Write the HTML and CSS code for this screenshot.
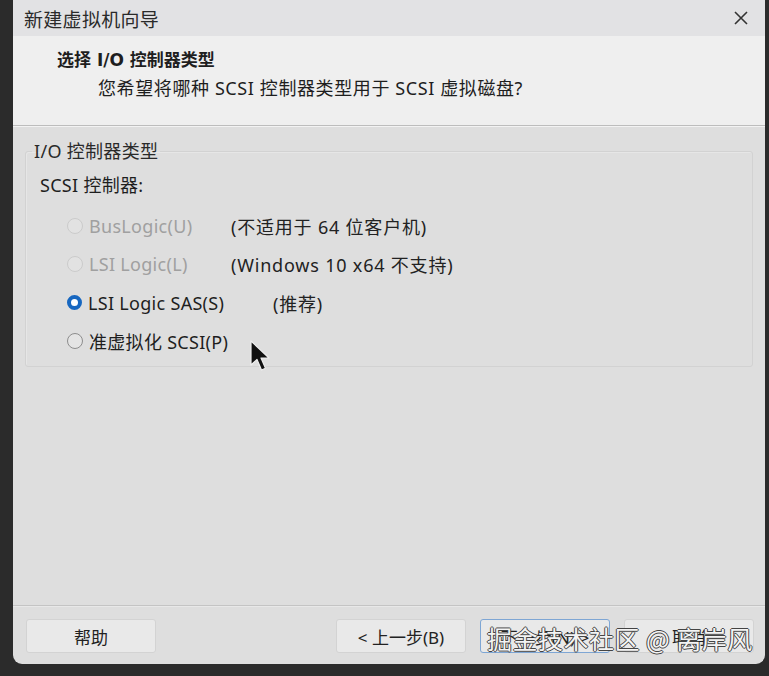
FILE: index.html
```html
<!DOCTYPE html>
<html lang="zh-CN">
<head>
<meta charset="utf-8">
<title>新建虚拟机向导</title>
<link rel="stylesheet" href="styles.css">
</head>
<body>
<div class="dialog">
  <div class="titlebar">
    <span class="title">新建虚拟机向导</span>
    <svg class="close" width="16" height="16" viewBox="0 0 16 16"><path d="M2 2 L14 14 M14 2 L2 14" stroke="#333" stroke-width="1.6" fill="none"/></svg>
  </div>
  <div class="header">
    <div class="h-title">选择 I/O 控制器类型</div>
    <div class="h-sub">您希望将哪种 SCSI 控制器类型用于 SCSI 虚拟磁盘?</div>
  </div>
  <div class="content">
    <fieldset class="group">
      <legend>I/O 控制器类型</legend>
      <div class="caption">SCSI 控制器:</div>
      <div class="options">
        <div class="opt disabled"><span class="radio"></span><span class="lbl">BusLogic(U)</span></div>
        <div class="note">(不适用于 64 位客户机)</div>
        <div class="opt disabled"><span class="radio"></span><span class="lbl">LSI Logic(L)</span></div>
        <div class="note">(Windows 10 x64 不支持)</div>
        <div class="opt"><span class="radio checked"></span><span class="lbl">LSI Logic SAS(S)</span></div>
        <div class="note rec">(推荐)</div>
        <div class="opt"><span class="radio"></span><span class="lbl">准虚拟化 SCSI(P)</span></div>
        <div class="note"></div>
      </div>
    </fieldset>
  </div>
  <div class="footer">
    <button class="btn">帮助</button>
    <div class="spacer"></div>
    <button class="btn">&lt; 上一步(B)</button>
    <button class="btn focus">下一步(N) &gt;</button>
    <button class="btn">取消</button>
  </div>
</div>
<svg class="cursor" width="24" height="34" viewBox="0 0 24 34"><path d="M1 1 L1 25 L7 19.5 L11.5 30 L15.5 28.3 L11 18 L19 18 Z" fill="#111" stroke="#eee" stroke-width="1.2" stroke-linejoin="round"/></svg>
<div class="watermark">掘金技术社区 @ 离岸风</div>
</body>
</html>
```
FILE: styles.css
```css
html, body {
  margin: 0;
  padding: 0;
}
body {
  background: #2b2b2b;
  width: 769px;
  height: 676px;
  overflow: hidden;
  position: relative;
  font-family: "Noto Sans", "Noto Sans CJK SC", sans-serif;
  color: #1e1e1e;
}
.dialog {
  margin-left: 13px;
  width: 752px;
  height: 664px;
  background: #dedede;
  border-radius: 0 0 9px 9px;
  display: flex;
  flex-direction: column;
  overflow: hidden;
}
.titlebar {
  height: 36px;
  background: #e2e2e4;
  display: flex;
  align-items: center;
  justify-content: space-between;
  padding: 0 16px 0 11px;
  flex-shrink: 0;
}
.title {
  font-family: "Noto Sans CJK SC", sans-serif;
  font-size: 19px;
  letter-spacing: 0.3px;
  color: #2a2a2a;
}
.close {
  display: block;
}
.header {
  height: 90px;
  background: #efefef;
  border-bottom: 1px solid #bdbdbd;
  box-shadow: 0 1px 0 #f3f3f3;
  padding: 13px 0 0 44px;
  box-sizing: border-box;
  flex-shrink: 0;
}
.h-title {
  font-family: "DejaVu Sans", "Noto Sans CJK SC", sans-serif;
  font-weight: bold;
  font-size: 17px;
  line-height: 22px;
}
.h-sub {
  font-family: "Noto Sans", "Noto Sans CJK SC", sans-serif;
  font-size: 18px;
  letter-spacing: 0.6px;
  line-height: 24px;
  margin-top: 5px;
  margin-left: 41px;
}
.content {
  flex: 1;
  padding: 14px 12px 0 12px;
}
.group {
  margin: 0;
  border: 1px solid #d2d2d2;
  border-radius: 3px;
  padding: 0 0 10px 14px;
  height: 227px;
  box-sizing: border-box;
  box-shadow: inset 1px 1px 0 #e6e6e6;
  font-size: 18px;
  letter-spacing: 0.3px;
}
.group legend {
  padding: 0 2px;
  margin-left: -8px;
  line-height: 22px;
  color: #2a2a2a;
}
.caption {
  line-height: 22px;
  margin-top: 12px;
}
.options {
  display: grid;
  grid-template-columns: 164px auto;
  grid-auto-rows: 38.3px;
  align-items: center;
  margin-left: 27px;
  margin-top: 11px;
}
.opt {
  display: flex;
  align-items: center;
}
.radio {
  width: 14px;
  height: 14px;
  border: 1.5px solid #8d8d8d;
  border-radius: 50%;
  background: #e4e4e4;
  margin-right: 6px;
  flex-shrink: 0;
}
.disabled .radio {
  border-color: #cbcbcb;
  background: #e2e2e2;
}
.disabled .lbl {
  color: #a0a0a0;
}
.radio.checked {
  background: #fff;
  border: 4.5px solid #1767c0;
  width: 7px;
  height: 7px;
}
.note {
  color: #222;
  letter-spacing: 0.8px;
}
.note.rec {
  margin-left: 42px;
}
.footer {
  height: 59px;
  border-top: 1px solid #c4c4c4;
  box-shadow: inset 0 1px 0 #e8e8e8;
  display: flex;
  align-items: flex-start;
  padding: 13px 11px 0 13px;
  box-sizing: border-box;
  gap: 14px;
  flex-shrink: 0;
}
.spacer {
  flex: 1;
}
.btn {
  width: 130px;
  height: 34px;
  background: #e9e9e9;
  border: 1px solid #d3d3d3;
  border-radius: 3px;
  font-family: "Noto Sans", "Noto Sans CJK SC", sans-serif;
  font-size: 17px;
  color: #222;
  padding: 0;
}
.btn.focus {
  border-color: #7ea6d4;
}
.cursor {
  position: absolute;
  left: 250px;
  top: 340px;
}
.watermark {
  position: absolute;
  left: 487px;
  top: 620px;
  font-family: "Noto Sans CJK SC", sans-serif;
  font-size: 25px;
  color: #f4f4f4;
  letter-spacing: 0.5px;
  text-shadow: 1px 0 0 #444, -1px 0 0 #444, 0 1px 0 #444, 0 -1px 0 #444;
  white-space: nowrap;
}
```
